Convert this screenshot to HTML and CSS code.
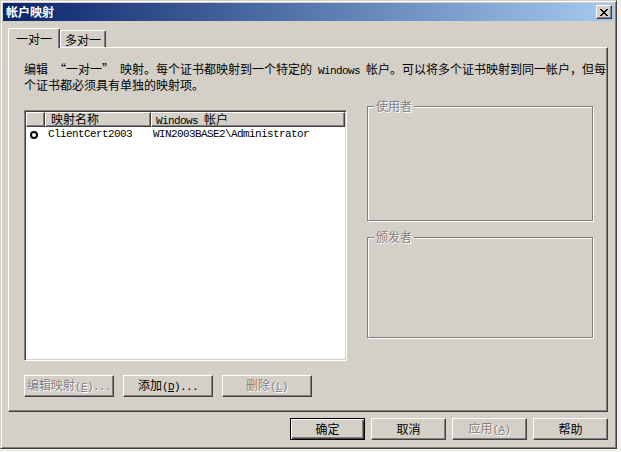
FILE: index.html
```
<!DOCTYPE html>
<html lang="zh-CN">
<head>
<meta charset="utf-8">
<title>帐户映射</title>
<link rel="stylesheet" href="styles.css">
</head>
<body>
<div class="window">
  <div class="titlebar">
    <span class="title">帐户映射</span>
    <button class="close" aria-label="关闭">
      <svg width="8" height="7" viewBox="0 0 8 7" shape-rendering="crispEdges">
        <path d="M0 0h2v1h-2zM6 0h2v1h-2zM1 1h2v1h-2zM5 1h2v1h-2zM2 2h4v1h-4zM3 3h2v1h-2zM2 4h4v1h-4zM1 5h2v1h-2zM5 5h2v1h-2zM0 6h2v1h-2zM6 6h2v1h-2z" fill="#000"/>
      </svg>
    </button>
  </div>
  <div class="content">
    <div class="tabs">
      <div class="tab active">一对一</div>
      <div class="tab">多对一</div>
    </div>
    <div class="panel">
      <p class="desc">
        <span class="line">编辑<span class="m"> </span>“一对一”<span class="m"> </span>映射。每个证书都映射到一个特定的<span class="m"> Windows </span>帐户。可以将多个证书映射到同一帐户，但每</span>
        <span class="line">个证书都必须具有单独的映射项。</span>
      </p>
      <div class="main">
        <div class="left">
          <div class="list">
            <div class="header">
              <div class="hcell c1"></div>
              <div class="hcell c2">映射名称</div>
              <div class="hcell c3"><span class="m">Windows </span>帐户</div>
            </div>
            <div class="row">
              <div class="cell c1"><span class="ring"></span></div>
              <div class="cell c2 m">ClientCert2003</div>
              <div class="cell c3 m">WIN2003BASE2\Administrator</div>
            </div>
          </div>
          <div class="actions">
            <button class="btn wide disabled">编辑映射<span class="m">(<u>E</u>)...</span></button>
            <button class="btn wide">添加<span class="m">(<u>D</u>)...</span></button>
            <button class="btn wide disabled">删除<span class="m">(<u>L</u>)</span></button>
          </div>
        </div>
        <div class="right">
          <fieldset class="group g1">
            <legend>使用者</legend>
          </fieldset>
          <fieldset class="group g2">
            <legend>颁发者</legend>
          </fieldset>
        </div>
      </div>
    </div>
    <div class="footer">
      <button class="btn default">确定</button>
      <button class="btn">取消</button>
      <button class="btn disabled">应用<span class="m">(<u>A</u>)</span></button>
      <button class="btn">帮助</button>
    </div>
  </div>
</div>
</body>
</html>
```

FILE: styles.css
```
* { box-sizing: border-box; }
html, body { margin: 0; padding: 0; }
body {
  width: 621px;
  height: 452px;
  overflow: hidden;
  background: #f2f1ee;
  font-family: "Noto Sans CJK SC", sans-serif;
  font-size: 12px;
  color: #000;
}
.m {
  font-family: "Liberation Mono", "Noto Sans CJK SC", monospace;
  font-size: 11px;
  letter-spacing: -0.6px;
}
.window {
  width: 617px;
  height: 449px;
  background: #d4d0c8;
  border: 1px solid;
  border-color: #d4d0c8 #404040 #404040 #d4d0c8;
  box-shadow: inset 1px 1px #fff, inset -1px -1px #808080;
  padding: 2px;
  display: flex;
  flex-direction: column;
}
.titlebar {
  height: 18px;
  display: flex;
  align-items: center;
  justify-content: space-between;
  padding: 0 2px 0 3px;
  background: linear-gradient(to right, #0a246a, #a6caf0);
}
.title {
  color: #fff;
  font-weight: bold;
  font-size: 12px;
  line-height: 14px;
}
.close {
  width: 16px;
  height: 14px;
  padding: 0;
  margin: 0;
  background: #d4d0c8;
  border: 1px solid;
  border-color: #fff #404040 #404040 #fff;
  box-shadow: inset -1px -1px #808080;
  display: flex;
  align-items: center;
  justify-content: center;
}
.close svg { display: block; margin-left: -1px; }
.content {
  flex: 1;
  display: flex;
  flex-direction: column;
  padding: 7px 6px 0 5px;
}
.tabs {
  display: flex;
  align-items: flex-end;
  height: 19px;
}
.tab {
  background: #d4d0c8;
  border-left: 1px solid #fff;
  border-top: 1px solid #fff;
  border-right: 1px solid #404040;
  box-shadow: inset -1px 0 #808080;
  border-top-left-radius: 2px;
  border-top-right-radius: 2px;
  height: 17px;
  width: 46px;
  text-align: center;
  line-height: 15px;
  padding-top: 1px;
}
.tab.active {
  position: relative;
  z-index: 1;
  width: 52px;
  height: 20px;
  margin-bottom: -1px;
  line-height: 15px;
  padding-top: 2px;
}
.panel {
  height: 365px;
  border: 1px solid;
  border-color: #fff #404040 #404040 #fff;
  box-shadow: inset -1px -1px #808080;
  padding: 14px 0 0 15px;
}
.desc {
  margin: 0;
  line-height: 13px;
}
.desc .line { display: block; white-space: nowrap; }
.main {
  display: flex;
  margin-top: 10px;
}
.left {
  display: flex;
  flex-direction: column;
  padding-top: 9px;
}
.list {
  width: 323px;
  height: 251px;
  background: #fff;
  border: 1px solid;
  border-color: #808080 #fff #fff #808080;
  box-shadow: inset 1px 1px #404040, inset -1px -1px #d4d0c8;
  padding: 1px;
}
.header { display: flex; height: 15px; }
.hcell {
  background: #d4d0c8;
  border: 1px solid;
  border-color: #fff #404040 #404040 #fff;
  box-shadow: inset -1px -1px #808080;
  height: 15px;
  line-height: 11px;
  white-space: nowrap;
}
.hcell.c1 { width: 19px; }
.hcell.c2 { width: 106px; padding-left: 5px; }
.hcell.c3 { flex: 1; padding-left: 4px; }
.row { display: flex; height: 15px; align-items: center; }
.cell { white-space: nowrap; line-height: 15px; }
.cell.c1 { width: 19px; padding-left: 4px; display: flex; align-items: center; }
.cell.c2 { width: 106px; padding-left: 3px; }
.cell.c3 { flex: 1; padding-left: 2px; }
.ring {
  width: 8px;
  height: 8px;
  border: 2px solid #000;
  border-radius: 50%;
  background: #fff;
}
.actions {
  display: flex;
  gap: 9px;
  margin-top: 14px;
}
.btn {
  width: 75px;
  height: 22px;
  padding: 0;
  margin: 0;
  background: #d4d0c8;
  border: 1px solid;
  border-color: #fff #404040 #404040 #fff;
  box-shadow: inset -1px -1px #808080;
  font-family: "Noto Sans CJK SC", sans-serif;
  font-size: 12px;
  color: #000;
  line-height: 18px;
  white-space: nowrap;
}
.btn.wide { width: 90px; }
.btn u { text-underline-offset: 1px; }
.btn.disabled {
  color: #808080;
  text-shadow: 1px 1px 0 #fff;
}
.btn.default {
  border-color: #000;
  box-shadow: inset 1px 1px #fff, inset -1px -1px #404040, inset -2px -2px #808080;
}
.right {
  margin-left: 20px;
  margin-top: -2px;
  width: 227px;
  display: flex;
  flex-direction: column;
  gap: 9px;
}
.group {
  margin: 0;
  padding: 0;
  width: 226px;
  border: 1px solid #808080;
  box-shadow: 1px 1px 0 #fff, inset 1px 1px 0 #fff;
}
.group legend {
  margin-left: 6px;
  padding: 0 2px;
  line-height: 14px;
  color: #808080;
  text-shadow: 1px 1px 0 #fff;
  background: #d4d0c8;
}
.g1 { height: 122px; }
.g2 { height: 108px; }
.footer {
  display: flex;
  justify-content: flex-end;
  gap: 6px;
  margin-top: 6px;
}
```
